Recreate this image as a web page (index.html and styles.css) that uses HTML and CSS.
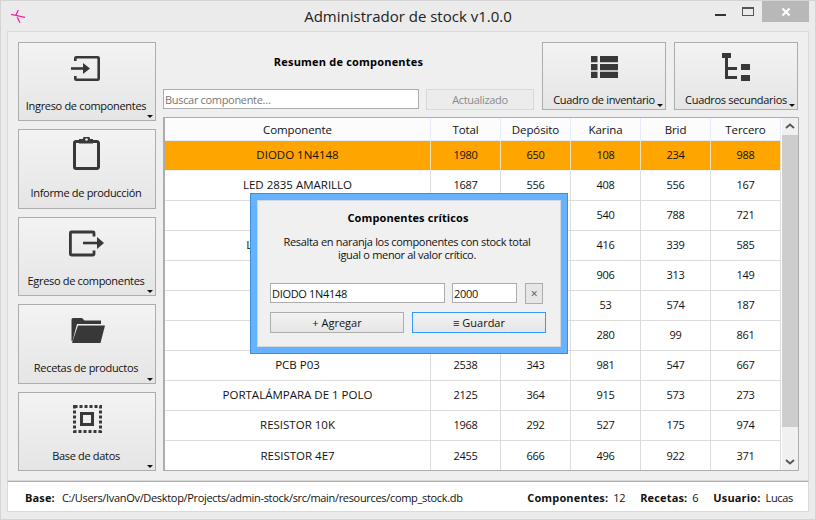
FILE: index.html
```html
<!DOCTYPE html>
<html lang="es">
<head>
<meta charset="utf-8">
<title>Administrador de stock v1.0.0</title>
<link rel="stylesheet" href="styles.css">
</head>
<body>
<div class="window">
  <header class="titlebar">
    <svg class="logo" width="15" height="13" viewBox="0 0 15 13"><path d="M0 4.300L14 7.300M7.300 0L5 5M6.300 7.300L9 12.700" fill="none" stroke="#f0259a" stroke-width="1.300"/></svg>
    <div class="title">Administrador de stock v1.0.0</div>
    <div class="controls">
      <span class="min"></span>
      <span class="max"></span>
      <span class="close"><svg width="10" height="10" viewBox="0 0 10 10"><path d="M1.500 1.500L8.500 8.500M8.500 1.500L1.500 8.500" stroke="#fff" stroke-width="2"/></svg></span>
    </div>
  </header>
  <main class="panel">
    <nav class="side">
      <button class="tool menu">
        <svg class="icon" width="36" height="36" viewBox="0 0 36 36"><path d="M6.300 11V8.300a1 1 0 0 1 1-1H28.700a1 1 0 0 1 1 1V28.700a1 1 0 0 1-1 1H7.300a1 1 0 0 1-1-1V26" fill="none" stroke="#383838" stroke-width="2.600"/><path d="M2 17.200h13v2.600H2z" fill="#383838"/><path d="M14 13L21 18.500 14 24z" fill="#383838"/></svg>
        <span>Ingreso de componentes</span>
      </button>
      <button class="tool">
        <svg class="icon" width="36" height="36" viewBox="0 2 36 36"><path d="M10 6.500H7A1.500 1.500 0 0 0 5.500 8V32A1.500 1.500 0 0 0 7 33.500H28A1.500 1.500 0 0 0 29.500 32V8A1.500 1.500 0 0 0 28 6.500H24" fill="none" stroke="#383838" stroke-width="3"/><path d="M10 4h4a3.500 3 0 0 1 7 0h3v4.500H10z" fill="#383838"/><circle cx="17.500" cy="4.500" r="1.300" fill="#efefef"/></svg>
        <span>Informe de producción</span>
      </button>
      <button class="tool menu">
        <svg class="icon" width="36" height="36" viewBox="0 0 36 36"><path d="M25 11.500V8A1 1 0 0 0 24 7H2.400A1 1 0 0 0 1.400 8V29A1 1 0 0 0 2.400 30H24A1 1 0 0 0 25 29V25.500" fill="none" stroke="#383838" stroke-width="2.800"/><path d="M14 16.700h15v2.600H14z" fill="#383838"/><path d="M28 12L35 18 28 24z" fill="#383838"/></svg>
        <span>Egreso de componentes</span>
      </button>
      <button class="tool menu">
        <svg class="icon" width="36" height="36" viewBox="0 0 36 36"><path d="M2.500 29V7.500A1.500 1.500 0 0 1 4 6H13L15.500 8.500H32V12H8L3.500 29z" fill="#383838"/><path d="M9 13.500H36L31.500 31H3z" fill="#383838"/></svg>
        <span>Recetas de productos</span>
      </button>
      <button class="tool menu">
        <svg class="icon" width="36" height="36" viewBox="0 0 36 36"><rect x="5.500" y="6.500" width="26" height="25" fill="none" stroke="#383838" stroke-width="3" stroke-dasharray="3 2"/><rect x="12.500" y="13.500" width="11" height="11" fill="none" stroke="#383838" stroke-width="3"/></svg>
        <span>Base de datos</span>
      </button>
    </nav>
    <section class="content">
      <div class="top">
        <div class="summary">
          <h1 class="summary-title">Resumen de componentes</h1>
          <div class="search-row">
            <input class="field search" placeholder="Buscar componente…">
            <button class="status-btn" disabled>Actualizado</button>
          </div>
        </div>
        <button class="tool wide menu">
          <svg class="icon" width="36" height="36" viewBox="0 0 36 36"><path d="M5 7h6.500v6.300H5zM14 7h18v6.300H14zM5 15h6.500v6.300H5zM14 15h18v6.300H14zM5 22.800h6.500V29H5zM14 22.800h18V29H14z" fill="#383838"/></svg>
          <span>Cuadro de inventario</span>
        </button>
        <button class="tool wide menu">
          <svg class="icon" width="36" height="36" viewBox="0 0 36 36"><path d="M4 4h9v5H4zM7 9h3v21H7zM7 18h12v3H7zM7 27h12v3H7zM23 15h9v6h-9zM23 26h9v6h-9z" fill="#383838"/></svg>
          <span>Cuadros secundarios</span>
        </button>
      </div>
      <div class="table-wrap">
        <table class="grid">
          <colgroup><col class="c-name"><col class="c-num"><col class="c-num"><col class="c-num"><col class="c-num"><col class="c-num"></colgroup>
          <thead><tr><th>Componente</th><th>Total</th><th>Depósito</th><th>Karina</th><th>Brid</th><th>Tercero</th></tr></thead>
          <tbody>
            <tr class="critical"><td>DIODO 1N4148</td><td>1980</td><td>650</td><td>108</td><td>234</td><td>988</td></tr>
            <tr><td>LED 2835 AMARILLO</td><td>1687</td><td>556</td><td>408</td><td>556</td><td>167</td></tr>
            <tr><td></td><td></td><td></td><td>540</td><td>788</td><td>721</td></tr>
            <tr><td>LED 2835 NARANJA</td><td></td><td></td><td>416</td><td>339</td><td>585</td></tr>
            <tr><td></td><td></td><td></td><td>906</td><td>313</td><td>149</td></tr>
            <tr><td></td><td></td><td></td><td>53</td><td>574</td><td>187</td></tr>
            <tr><td></td><td></td><td></td><td>280</td><td>99</td><td>861</td></tr>
            <tr><td>PCB P03</td><td>2538</td><td>343</td><td>981</td><td>547</td><td>667</td></tr>
            <tr><td>PORTALÁMPARA DE 1 POLO</td><td>2125</td><td>364</td><td>915</td><td>573</td><td>273</td></tr>
            <tr><td>RESISTOR 10K</td><td>1968</td><td>292</td><td>527</td><td>175</td><td>974</td></tr>
            <tr class="last"><td>RESISTOR 4E7</td><td>2455</td><td>666</td><td>496</td><td>922</td><td>371</td></tr>
          </tbody>
        </table>
        <div class="scrollbar">
          <svg class="arrow" width="16" height="17" viewBox="0 0 16 17"><path d="M4 10L8 6.500 12 10" fill="none" stroke="#555" stroke-width="1.800"/></svg>
          <div class="track"><div class="thumb"></div></div>
          <svg class="arrow" width="16" height="17" viewBox="0 0 16 17"><path d="M4 7L8 10.500 12 7" fill="none" stroke="#555" stroke-width="1.800"/></svg>
        </div>
      </div>
    </section>
  </main>
  <footer class="statusbar">
    <div class="base"><b>Base:</b><span>C:/Users/IvanOv/Desktop/Projects/admin-stock/src/main/resources/comp_stock.db</span></div>
    <div class="stats">
      <div><b>Componentes:</b><span>12</span></div>
      <div><b>Recetas:</b><span>6</span></div>
      <div><b>Usuario:</b><span>Lucas</span></div>
    </div>
  </footer>
  <div class="dialog">
    <div class="dialog-inner">
      <h2 class="dialog-title">Componentes críticos</h2>
      <p class="dialog-text">Resalta en naranja los componentes con stock total<br>igual o menor al valor crítico.</p>
      <div class="dialog-row">
        <input class="field d-name" value="DIODO 1N4148">
        <input class="field d-value" value="2000">
        <button class="d-x">×</button>
      </div>
      <div class="dialog-actions">
        <button class="d-btn">+ Agregar</button>
        <button class="d-btn focus">≡ Guardar</button>
      </div>
    </div>
  </div>
</div>
</body>
</html>
```
FILE: styles.css
```css
* { box-sizing: border-box; }
html, body { margin: 0; padding: 0; }
body { width: 816px; height: 520px; overflow: hidden; font-family: "Open Sans", "Noto Sans", sans-serif; font-size: 11px; letter-spacing: -0.32px; color: #111; }
button, input { font-family: inherit; font-size: inherit; letter-spacing: inherit; color: inherit; margin: 0; }
.window { position: relative; width: 816px; height: 520px; display: flex; flex-direction: column; background: #ebebeb; border: 1px solid #d4d4d4; }
.titlebar { height: 30px; flex: none; position: relative; display: flex; align-items: flex-start; justify-content: space-between; padding-left: 10px; }
.logo { margin-top: 9px; }
.title { position: absolute; left: 0; right: 0; top: 5px; text-align: center; font-size: 15px; line-height: 20px; letter-spacing: 0; color: #222; }
.controls { display: flex; align-items: flex-start; padding-right: 6px; }
.min { width: 11px; height: 2px; background: #333; margin-top: 13px; margin-right: 16px; }
.max { width: 12px; height: 9px; border: 1px solid #555; border-top-width: 2px; margin-top: 6px; margin-right: 8px; }
.close { width: 47px; height: 21px; background: #b8b8b8; display: flex; align-items: center; justify-content: center; }
.panel { flex: none; height: 450px; margin: 0 6px; display: flex; gap: 7px; padding: 10px 9px 9px 10px; background: #efefef; border: 1px solid #dadada; }
.side { width: 138px; flex: none; display: grid; grid-template-rows: repeat(5, 1fr); gap: 8px; }
.tool { position: relative; display: flex; flex-direction: column; align-items: center; padding: 7px 0 0; background: linear-gradient(#f3f3f3, #e5e5e5); border: 1px solid #adadad; line-height: 16px; }
.tool .icon { margin-bottom: 12px; flex: none; }
.side .tool span { margin-right: 2px; }
.tool.wide { width: 124px; height: 68px; flex: none; padding-top: 6px; }
.tool.wide .icon { margin-bottom: 7px; }
.tool.menu::after { content: ""; position: absolute; right: 2px; bottom: 2px; border: 3px solid transparent; border-top: 3px solid #111; border-bottom: 0; }
.content { flex: 1; min-width: 0; display: flex; flex-direction: column; gap: 7px; }
.top { display: flex; gap: 8px; height: 68px; flex: none; width: 635px; }
.summary { width: 371px; flex: none; display: flex; flex-direction: column; justify-content: space-between; }
.summary-title { margin: 11px 0 0; text-align: center; font-size: 11px; line-height: 18px; font-weight: 700; letter-spacing: 0.2px; color: #000; }
.search-row { display: flex; gap: 7px; }
.field { display: block; height: 20px; background: #fff; border: 1px solid #adadad; padding: 0 1px; outline: 0; border-radius: 0; }
.field::placeholder { color: #777; opacity: 1; }
.search { width: 256px; margin-bottom: 1px; }
.status-btn { width: 108px; height: 21px; background: #ececec; border: 1px solid #d9d9d9; color: #8a8a8a; padding: 0; }
.table-wrap { flex: 1; min-height: 0; width: 636px; display: flex; align-items: stretch; background: #fff; border: 1px solid #adadad; border-left-width: 2px; }
.grid { width: 616px; flex: none; border-collapse: separate; border-spacing: 0; table-layout: fixed; }
.c-name { width: 266px; }
.c-num { width: 70px; }
.grid th { height: 23px; padding: 0; font-size: 11.5px; letter-spacing: -0.1px; font-weight: 400; background: #fcfcfc; border-right: 1px solid #e3ecf8; border-bottom: 1px solid #e3ecf8; }
.grid td { height: 30px; padding: 0 0 2px; text-align: center; border-right: 1px solid #dcdcdc; border-bottom: 1px solid #dcdcdc; }
.grid td:first-child { font-size: 11.5px; letter-spacing: 0; }
.grid .last td { height: 29px; padding: 0 0 1px; border-bottom: 0; }
.critical td { background: #ffa500; border-right-color: #f4e0bc; border-bottom-color: #f0f0f0; }
.scrollbar { flex: 1; display: flex; flex-direction: column; background: #f0f0f0; border-left: 1px solid #fff; }
.arrow { flex: none; display: block; }
.track { flex: 1; }
.thumb { height: 292px; background: #cdcdcd; }
.statusbar { flex: none; height: 31px; margin: 0 6px; display: flex; justify-content: space-between; align-items: center; padding: 2px 15px 0 17px; background: #fff; border: 1px solid #dadada; border-top: 1px solid #adadad; }
.base, .stats, .stats div { display: flex; }
.base { gap: 7px; }
.stats { gap: 15px; }
.stats div { gap: 5px; }
.stats b, .base b { font-weight: 700; letter-spacing: 0.15px; }
.dialog { position: absolute; left: 249px; top: 192px; width: 318px; height: 161px; background: #66b2ff; border: 1px solid #3d8fd6; padding: 6px; }
.dialog-inner { height: 100%; background: #f0f0f0; border: 1px solid #cfd8e2; padding: 0 12px; display: flex; flex-direction: column; }
.dialog-title { margin: 8px 2px 0 0; text-align: center; font-size: 11px; line-height: 18px; font-weight: 700; letter-spacing: 0.1px; color: #000; }
.dialog-text { margin: 8px 4px 0 0; text-align: center; line-height: 13px; }
.dialog-row { display: flex; gap: 7px; margin-top: 22px; }
.d-name { width: 175px; }
.d-value { width: 65px; }
.d-x { width: 18px; height: 21px; margin-left: 1px; padding: 0; font-size: 12px; line-height: 18px; background: #e6e6e6; border: 1px solid #adadad; color: #3b5470; }
.dialog-actions { display: flex; gap: 8px; margin-top: 8px; }
.d-btn { width: 134px; height: 21px; padding: 0; letter-spacing: 0; background: linear-gradient(#f3f3f3, #e5e5e5); border: 1px solid #adadad; }
.d-btn.focus { border-color: #3399ff; }
```
